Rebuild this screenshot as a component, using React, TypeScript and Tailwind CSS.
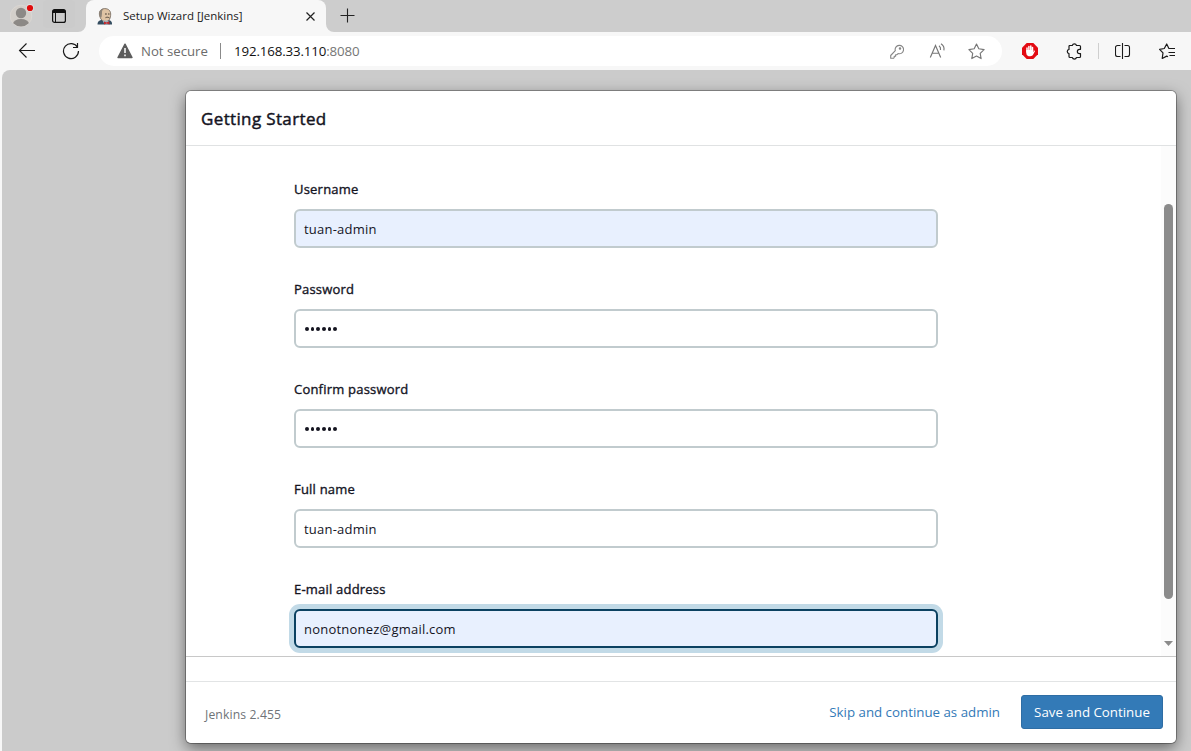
import React from "react";

function ProfileIcon() {
  return (
    <svg width="26" height="28" viewBox="0 0 26 28" className="shrink-0">
      <defs>
        <clipPath id="face"><circle cx="11" cy="16" r="10.5" /></clipPath>
      </defs>
      <circle cx="11" cy="16" r="10.8" fill="#d3cfca" stroke="#dcd8d4" strokeWidth="0.8" />
      <g clipPath="url(#face)" fill="#8c8986">
        <circle cx="11" cy="13" r="5.2" />
        <ellipse cx="11" cy="24" rx="8" ry="5" />
      </g>
      <circle cx="20" cy="8" r="3.9" fill="#dedede" />
      <circle cx="20" cy="8" r="3.1" fill="#e00b0b" />
    </svg>
  );
}

function TabActionsIcon() {
  return (
    <svg width="14" height="14" viewBox="0 0 14 14" fill="none" stroke="#111" strokeWidth="1.2">
      <rect x="0.6" y="0.6" width="12.8" height="12.8" rx="2" />
      <path d="M.6 4V2.600a2 2 0 0 1 2-2h8.800a2 2 0 0 1 2 2V4z" fill="#111" stroke="none" />
      <path d="M3.500 4v9.400" strokeWidth="1" />
    </svg>
  );
}

function JenkinsIcon() {
  return (
    <svg width="16" height="17" viewBox="0 0 16 17">
      <path d="M0.5 16.5c-.1-2.400.8-3.700 3.500-4.500h7.500c2.600.5 3.800 2 3.500 4.500z" fill="#344d60" />
      <path d="M2.600 7.500C1.600 3.600 3.800.8 7.600.6c4.400-.1 6.600 2.800 6 7-.4 3.600-2 6-5 6-3.200 0-5.200-2.400-6-6.100z" fill="#dfc3a4" stroke="#5b5148" strokeWidth="0.7" />
      <path d="M2.500 8.500C1 4 3.400.9 7 .6 5.200 1.900 4.800 3.500 5 5.200L4.500 9.500z" fill="#8d8378" />
      <path d="M8 6h1.800M11 6h1.500M8.500 9.700c1.400-.7 2.600-.6 3.900.2" stroke="#4a4037" strokeWidth="1" fill="none" />
      <path d="M5.500 12.500l2 4h3l1.500-3.800z" fill="#9fb0bd" />
      <path d="M7 13.400l2.600 1 2.600-1.200.4 3.200-3-1-2.600 1z" fill="#c2282c" />
    </svg>
  );
}

function TabStrip() {
  return (
    <div className="flex h-8 bg-[#cdcdcd]">
      <div className="flex w-[86px] items-start pl-[10px]">
        <ProfileIcon />
        <div className="ml-[7px] flex h-[28px] w-[32px] items-center justify-center rounded bg-[#cbcbcb] pt-[4px]">
          <TabActionsIcon />
        </div>
      </div>
      <div className="relative flex w-[240px] items-center rounded-t-[8px] bg-[#f7f7f7] pl-[11px]">
        <svg className="absolute -left-2 bottom-0" width="8" height="8"><path d="M8 0v8H0a8 8 0 0 0 8-8z" fill="#f7f7f7" /></svg>
        <svg className="absolute -right-2 bottom-0" width="8" height="8"><path d="M0 0v8h8a8 8 0 0 1-8-8z" fill="#f7f7f7" /></svg>
        <JenkinsIcon />
        <span className="ml-[10px] w-[183px] whitespace-nowrap text-[11.5px] text-[#1b1b1b]">Setup Wizard [Jenkins]</span>
        <svg width="9" height="9" viewBox="0 0 9 9" stroke="#222" strokeWidth="1.2" className="mt-px shrink-0"><path d="M.5.500l8 8M8.500.5l-8 8" /></svg>
      </div>
      <svg className="ml-[14px] mt-[8px]" width="15" height="15" stroke="#222" strokeWidth="1.1"><path d="M.5 7.500h14M7.500.5v14" /></svg>
    </div>
  );
}

function Toolbar() {
  return (
    <div className="flex h-[38px] items-center bg-[#f7f7f7]">
      <svg className="ml-[18px]" width="18" height="16" viewBox="0 0 18 16" fill="none" stroke="#1a1a1a" strokeWidth="1.1"><path d="M17 7.500H1.500M8.500 .5L1.500 7.500l7 7" /></svg>
      <svg className="ml-[26px]" width="18" height="18" viewBox="0 0 18 18" fill="none" stroke="#1a1a1a" strokeWidth="1.2"><path d="M15.600 5.500A7.500 7.500 0 1 0 16.500 9M15.500 1v4.500h-4.500" /></svg>
      <div className="ml-[19px] flex h-[30px] w-[903px] items-center rounded-full bg-white">
        <svg className="ml-[18px]" width="16" height="16" viewBox="0 0 16 16"><path d="M8 1.200L15 14.500H1z" fill="#5c5c5c" stroke="#5c5c5c" strokeWidth="1.400" strokeLinejoin="round" /><path d="M8 5v5M8 11.500v1.800" stroke="#fff" strokeWidth="1.500" /></svg>
        <span className="ml-[8px] w-[79px] whitespace-nowrap pt-px text-[13.200px] text-[#6b6b6b]">Not secure</span>
        <div className="h-4 w-px bg-[#8a8a8a]" />
        <span className="ml-[13px] w-[641px] whitespace-nowrap pt-px text-[13.300px] tracking-[-0.140px] text-[#111]">192.168.33.110<span className="text-[#767676]">:8080</span></span>
        <div className="flex shrink-0 items-center pl-[15px]">
          <svg width="14" height="15" viewBox="0 0 14 15" fill="none" stroke="#858585" strokeWidth="1.100" strokeLinejoin="round"><path d="M5.300 6.700a4.200 4.200 0 1 1 2.800 2.900L7 10.700H5.600v1.500H4.200v1.300L3.500 14.300H.7v-2.800z" /><circle cx="10" cy="4.400" r=".7" /></svg>
          <svg className="ml-[25px]" width="17" height="16" viewBox="0 0 17 16" fill="none" stroke="#767676" strokeWidth="1.150"><path d="M1.300 14.500L6.500 2.500l5.200 12M3 10.200h7M10 2.800c1.200.8 1.800 2.300 1.500 4.200M12 .8c2.400 1.500 3.400 3.900 2.900 6.500" /></svg>
          <svg className="ml-[22px]" width="17" height="17" viewBox="0 0 17 17" fill="none" stroke="#767676" strokeWidth="1.150" strokeLinejoin="round"><path d="M8.500 1l2.300 4.800 5.300.8-3.900 3.700.9 5.300-4.600-2.500-4.700 2.500.9-5.300L.9 6.600l5.300-.8z" /></svg>
        </div>
      </div>
      <svg className="ml-[20px]" width="16" height="16" viewBox="0 0 16 16"><path d="M4.700 0h6.600L16 4.700v6.600L11.300 16H4.700L0 11.300V4.700z" fill="#e30b13" /><path d="M5 9V5M6.900 8V3.400M8.800 8V3M10.500 8V4.400" stroke="#fff" strokeWidth="1.500" strokeLinecap="round" /><path d="M4.250 7h7V9.200l.8-1.300c.4-.5 1-.3.900.3L11.200 11.600c-.6 1.200-1.500 1.700-3 1.700-2.300 0-3.950-1-3.950-3.600z" fill="#fff" /></svg>
      <svg className="ml-[28px]" width="17" height="17" viewBox="0 0 17 17" fill="none" stroke="#1a1a1a" strokeWidth="1.200" strokeLinejoin="round"><path d="M3.300 2.500h3a2.200 2.200 0 0 1 4.200 0h3a1 1 0 0 1 1 1v2.800h-1a2.150 2.150 0 0 0 0 4.300h1v2.900a1 1 0 0 1-1 1h-3a2.200 2.200 0 0 1-4.200 0h-2.300a1 1 0 0 1-1-1v-2.800a2.200 2.200 0 0 1 0-4.300V3.500z" /></svg>
      <div className="ml-[15px] h-4 w-px bg-[#cfcfcf]" />
      <svg className="ml-[16px]" width="16" height="16" viewBox="0 0 16 16" fill="none" stroke="#1a1a1a" strokeWidth="1.100"><path d="M5.500 2.500H2.500a2 2 0 0 0-2 2v7a2 2 0 0 0 2 2h3M7.500 0v16M9.500 2.500h3a2 2 0 0 1 2 2v7a2 2 0 0 1-2 2h-3" /></svg>
      <svg className="ml-[28px]" width="17" height="17" viewBox="0 0 17 17" fill="none" stroke="#1a1a1a" strokeWidth="1.200" strokeLinejoin="round"><path d="M16 5.500H9.900L7.700 1 5.300 5.500l-4.700.8 3.400 3.600-.8 5.600 4.500-2.400 1.300.6M9.500 9.500H16M10.500 12.500H16" /></svg>
    </div>
  );
}

type FieldProps = { label: string; value: string; kind?: "plain" | "filled" | "focused" | "secret" };

const fieldStyles = {
  plain: "border-[#c1cbce] bg-white",
  secret: "border-[#c1cbce] bg-white",
  filled: "border-[#c1cbce] bg-[#e8f0fe]",
  focused: "border-[#0b4161] bg-[#e8f0fe] ring-[5px] ring-[#c2dae7]",
};

function Field({ label, value, kind = "plain" }: FieldProps) {
  return (
    <label className="flex h-[100px] flex-col">
      <span className="h-[30px] text-[13px] leading-[20px] tracking-[0.210px] text-[#14141f] [-webkit-text-stroke:0.350px_#14141f]">{label}</span>
      <span className={"flex h-[39px] w-[644px] items-center rounded-[6px] border-2 px-[8px] pt-px " + fieldStyles[kind]}>
        {kind === "secret" ? (
          <span className="flex gap-[2px] pl-px">
            {Array.from(value).map((_, i) => <i key={i} className="size-[3.700px] rounded-full bg-[#14141f]" />)}
          </span>
        ) : (
          <span className="pt-px text-[13px] tracking-[0.220px] text-[#14141f]">{value}</span>
        )}
      </span>
    </label>
  );
}

function SetupDialog() {
  return (
    <section className="flex h-[652px] w-[990px] flex-col overflow-hidden rounded-[5px] bg-white">
      <header className="h-[55px] shrink-0 border-b border-[#e0e2e3] pl-[15px] text-[17px] leading-[55px] tracking-[0.360px] text-[#14141f] [-webkit-text-stroke:0.450px_#14141f]">Getting Started</header>
      <div className="flex h-[511px] shrink-0 overflow-hidden border-b border-[#c8c8c8]">
        <form className="flex-1 pl-[108px] pt-[33px]">
          <Field label="Username" value="tuan-admin" kind="filled" />
          <Field label="Password" value="••••••" kind="secret" />
          <Field label="Confirm password" value="••••••" kind="secret" />
          <Field label="Full name" value="tuan-admin" />
          <Field label="E-mail address" value="nonotnonez@gmail.com" kind="focused" />
        </form>
        <div className="flex w-[15px] flex-col items-center bg-[#fcfcfc] pt-[58px]">
          <div className="h-[395px] w-[9px] rounded-full bg-[#8b8b8b]" />
          <svg className="mt-[42px]" width="9" height="5"><path d="M0 0h9L4.500 5z" fill="#8b8b8b" /></svg>
        </div>
      </div>
      <footer className="mt-[24px] flex flex-1 items-center border-t border-[#e2e4e5] pb-px pl-[19px] pr-[13px]">
        <span className="flex-1 pt-[6px] text-[12.200px] tracking-[0.120px] text-[#6f7377]">Jenkins 2.455</span>
        <a className="mr-[21px] whitespace-nowrap pt-px text-[13.300px] text-[#337ab7]">Skip and continue as admin</a>
        <button className="h-[34px] w-[142px] whitespace-nowrap rounded-[3px] border border-[#2e6da4] bg-[#337ab7] pt-px text-[13.300px] text-white">Save and Continue</button>
      </footer>
    </section>
  );
}

export default function App() {
  return (
    <div className="flex h-[751px] w-[1191px] flex-col overflow-hidden bg-[#f7f7f7] font-['Open_Sans',sans-serif]">
      <TabStrip />
      <Toolbar />
      <main className="ml-[2px] flex-1 overflow-hidden rounded-tl-[8px] bg-[#cbcbcb] pl-[184px] pt-[21px]">
        <div className="w-[990px] rounded-[5px] shadow-[0_0_0_1px_rgba(0,0,0,0.3),0_5px_15px_rgba(0,0,0,0.5)]">
          <SetupDialog />
        </div>
      </main>
    </div>
  );
}
